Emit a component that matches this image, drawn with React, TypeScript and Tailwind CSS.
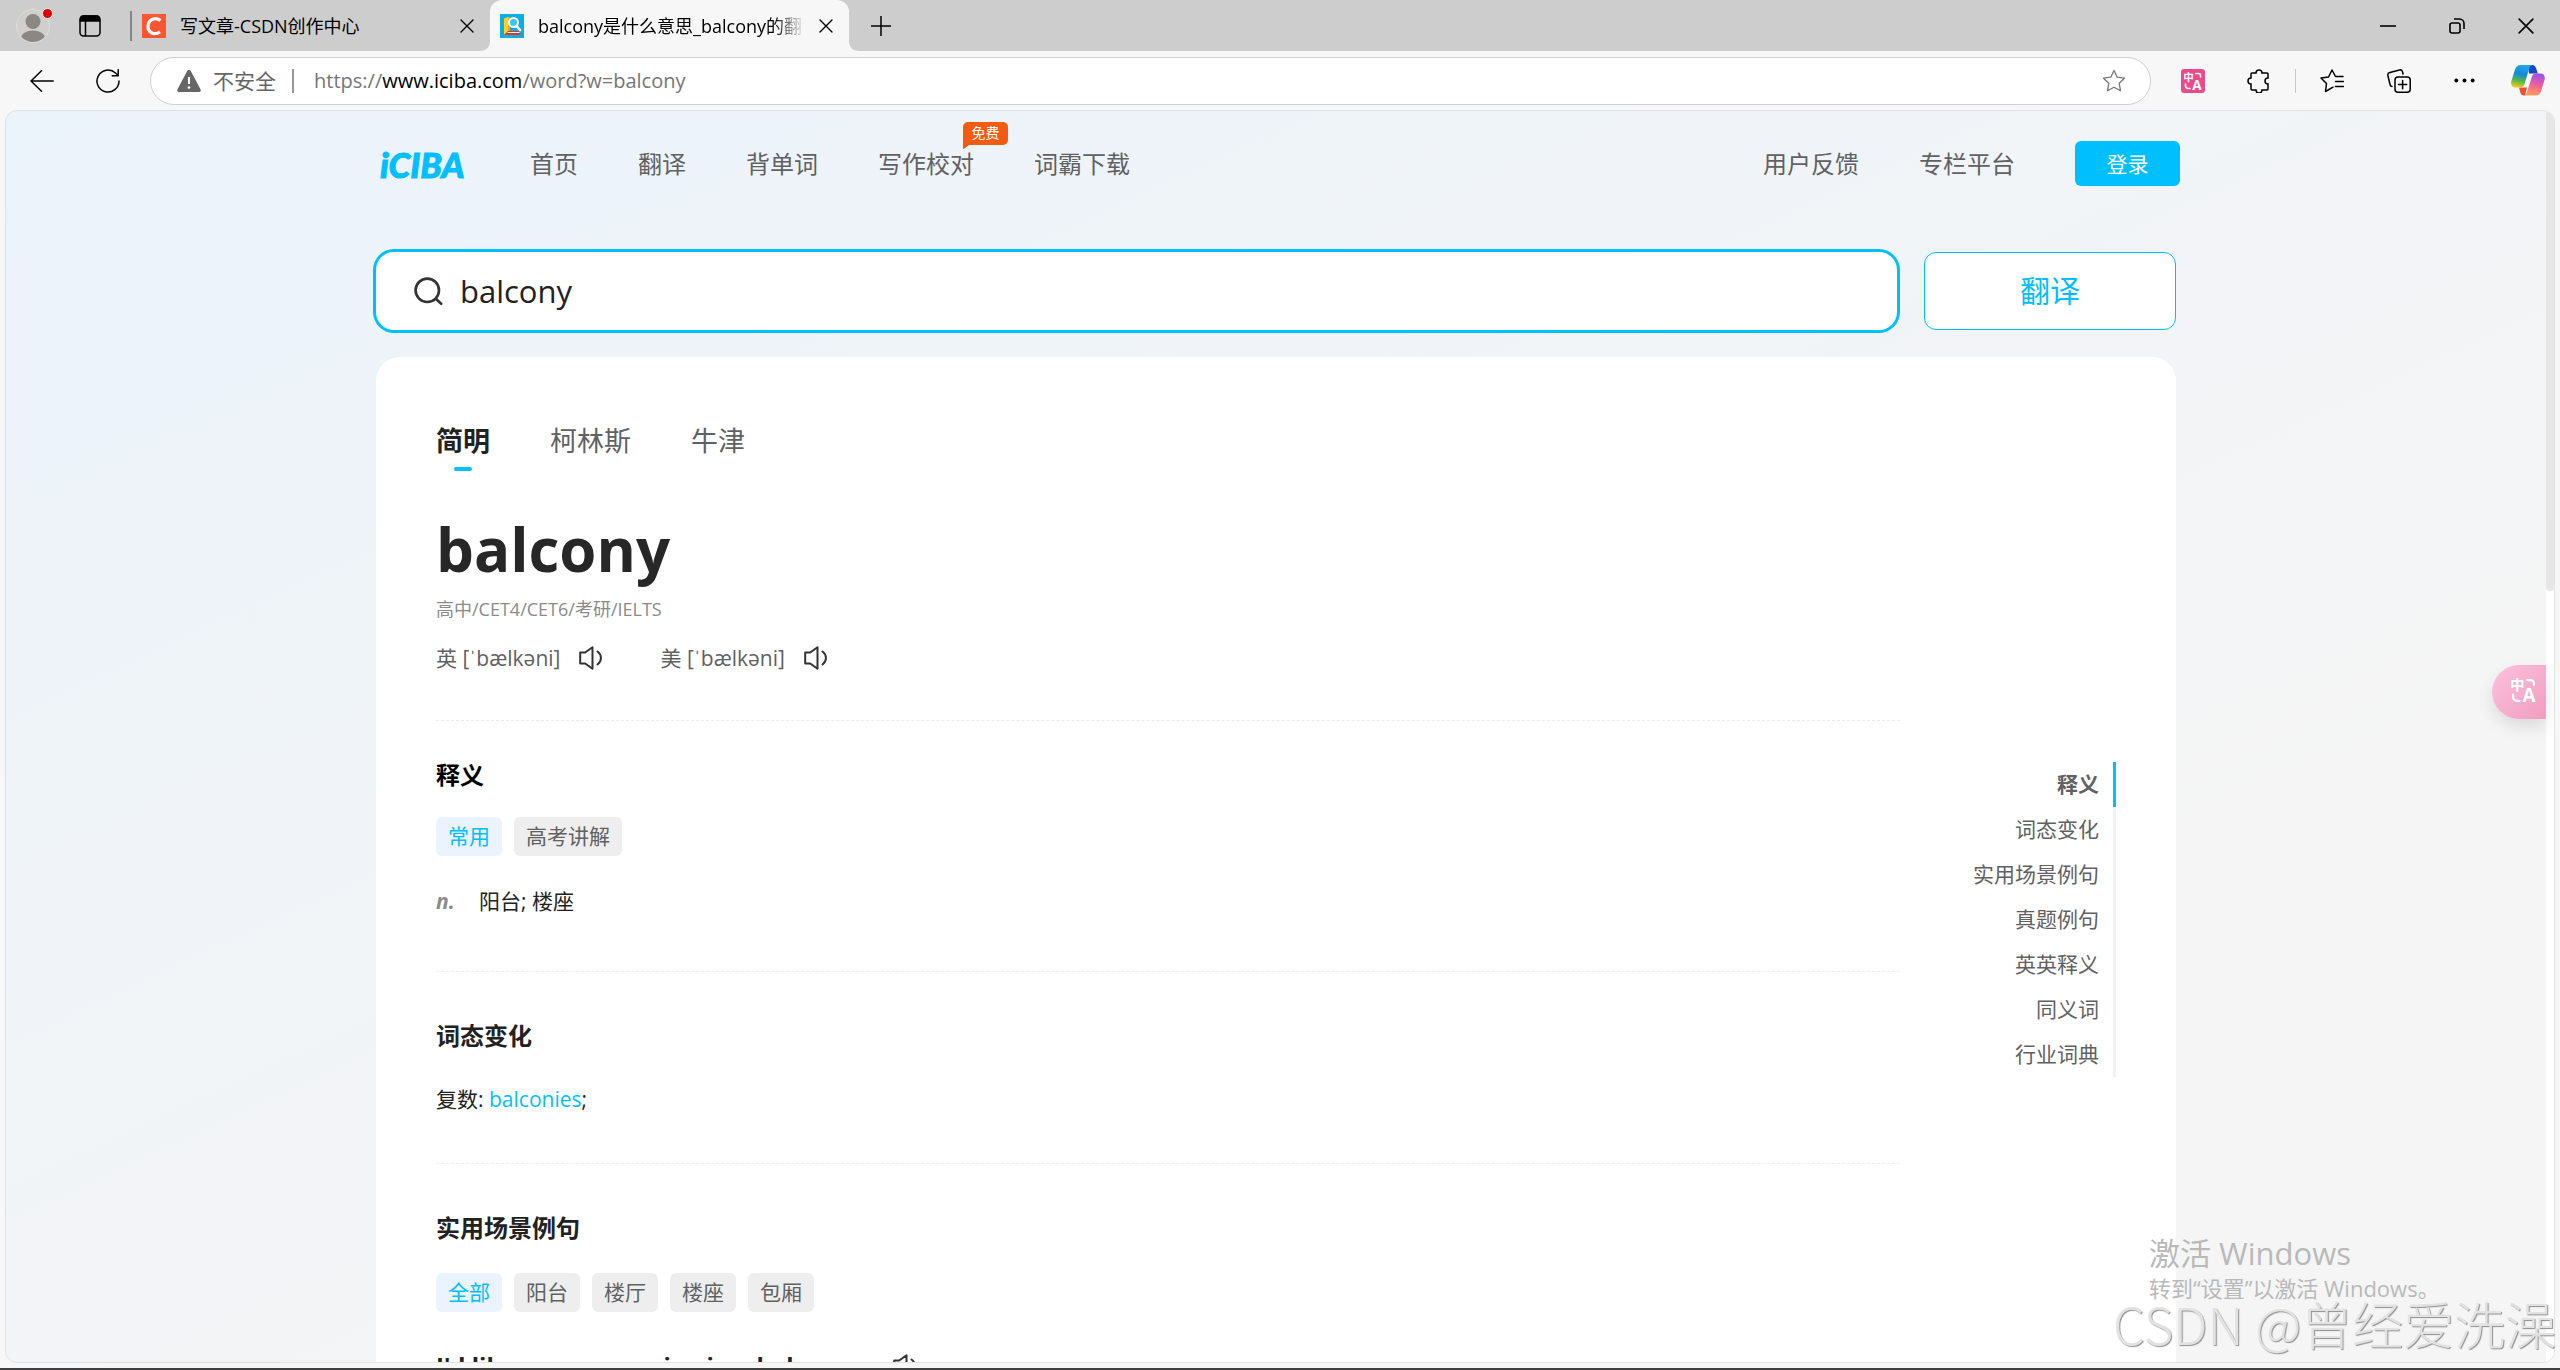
import { useState } from "react";
import type { ReactNode } from "react";
import clsx from "clsx";

const NAV_LINKS = [
  { label: "首页" },
  { label: "翻译" },
  { label: "背单词" },
  { label: "写作校对", badge: "免费" },
  { label: "词霸下载" },
];

const DICTIONARIES = ["简明", "柯林斯", "牛津"];

const ANCHORS = ["释义", "词态变化", "实用场景例句", "真题例句", "英英释义", "同义词", "行业词典"];

function CloseIcon({ className }: { className?: string }) {
  return (
    <svg viewBox="0 0 14 14" className={className} fill="none" stroke="currentColor" strokeWidth="1.4" strokeLinecap="round">
      <path d="M1 1l12 12M13 1L1 13" />
    </svg>
  );
}

function TranslateGlyph({ className }: { className?: string }) {
  return (
    <svg viewBox="0 0 24 24" className={className} fill="none" stroke="#fff" strokeWidth="2.200" strokeLinecap="round">
      <text x="-1" y="11.500" fontSize="14" fontWeight="700" fill="#fff" stroke="none" fontFamily="Noto Sans CJK SC, sans-serif">
        中
      </text>
      <text x="11" y="23.500" fontSize="18" fontWeight="700" fill="#fff" stroke="none" fontFamily="Open Sans, sans-serif">
        A
      </text>
      <path d="M15.500 2h3.500a3 3 0 0 1 3 3v1.500" />
      <path d="M2 16v2a4 4 0 0 0 4 4h2" />
    </svg>
  );
}

function SpeakerIcon() {
  return (
    <svg viewBox="0 0 24 24" className="size-6" fill="none" stroke="#333" strokeWidth="2" strokeLinejoin="round" strokeLinecap="round">
      <path d="M1.200 6.500h5L13.500 1.200v21.600L6.200 17.500h-5z" />
      <path d="M18.500 5.500c4.600 3.400 4.600 9.600 0 13" />
    </svg>
  );
}

function StarPath() {
  return (
    <path d="M12 1.500l3.200 6.700 7.300 1-5.300 5.100 1.300 7.400L12 18.200l-6.500 3.500 1.300-7.400L1.500 9.200l7.300-1z" />
  );
}

function CopilotIcon() {
  return (
    <svg viewBox="0 0 34 31" className="h-[31px] w-[34px]">
      <defs>
        <linearGradient id="cpLeft" x1="0.500" y1="0" x2="0.300" y2="1">
          <stop offset="0" stopColor="#22a5f0" />
          <stop offset="0.400" stopColor="#1489d8" />
          <stop offset="0.700" stopColor="#52b84f" />
          <stop offset="1" stopColor="#f5c916" />
        </linearGradient>
        <linearGradient id="cpRight" x1="0.600" y1="0" x2="0.400" y2="1">
          <stop offset="0" stopColor="#9a52ee" />
          <stop offset="0.500" stopColor="#ee5f9a" />
          <stop offset="1" stopColor="#ff9f55" />
        </linearGradient>
      </defs>
      <path d="M17 0h4c2.500 0 3.600 1.600 4.200 3.600L26.800 8.500H18z" fill="#1548c8" />
      <path d="M8 22.500h8L14 30.500h-1c-2.300 0-3.200-1.500-3.800-3.500z" fill="#ee4f31" />
      <path d="M9.500 0h12c-2 .5-2.800 2-3.400 4l-4.600 15c-.7 2.300-1.900 3.500-4.200 3.500H4.500C1 22.500-.6 19.600.400 16L4 4.500C5 1.500 6.800 0 9.500 0z" fill="url(#cpLeft)" />
      <path d="M24.500 8.500h5c3.500 0 5 2.900 4 6.500L30 26.500c-.9 2.800-2.700 4-5.200 4h-12c2-.5 2.800-2 3.400-4l4.600-14.500c.7-2.300 1.500-3.500 3.700-3.500z" fill="url(#cpRight)" />
    </svg>
  );
}

function TabStrip() {
  return (
    <div className="flex h-[51px] items-center bg-[#cdcdcd] pl-4">
      <button type="button" aria-label="Profile" className="relative size-[34px]">
        <svg viewBox="0 0 34 34" className="size-full">
          <defs>
            <clipPath id="avatarClip">
              <circle cx="17" cy="17" r="16" />
            </clipPath>
          </defs>
          <circle cx="17" cy="17" r="16.500" fill="#d1cfcb" stroke="#dddcd9" />
          <g fill="#8b8884" clipPath="url(#avatarClip)">
            <circle cx="17" cy="12.500" r="7.500" />
            <ellipse cx="17" cy="29.500" rx="12" ry="8" />
          </g>
        </svg>
        <span className="absolute -right-[3px] -top-[1px] size-[11px] rounded-full border border-[#f2f2f2] bg-[#e10000]" />
      </button>
      <button type="button" aria-label="Workspaces" className="ml-[29px]">
        <svg viewBox="0 0 22 22" className="size-[22px]" fill="none" stroke="#000" strokeWidth="1.500">
          <rect x="1" y="1" width="20" height="20" rx="3.500" />
          <path d="M1.500 6V4a3 3 0 0 1 3-3h13a3 3 0 0 1 3 3v2z" fill="#000" />
          <path d="M6.500 6v15" />
        </svg>
      </button>
      <span className="ml-[29px] h-[30px] w-0.5 bg-[#868686]" />

      <div className="flex w-[358px] items-center gap-3.5 pl-2.5 pr-4">
        <svg viewBox="0 0 24 24" className="size-6">
          <path fill="#fc5531" d="M0 0h24v24H0z" />
          <path d="M18.500 6.500C13.500 2.800 6.500 5 6 12c-.3 7 6.500 9.500 12 6" fill="none" stroke="#fff" strokeWidth="3.200" />
        </svg>
        <span className="flex-1 truncate text-[18px] leading-6 text-black">写文章-CSDN创作中心</span>
        <button type="button" aria-label="Close tab">
          <CloseIcon className="size-3.5" />
        </button>
      </div>

      <div className="relative flex h-full w-[359px] items-center gap-3.5 rounded-t-xl bg-[#f7f7f7] pl-2.5 pr-4">
        <svg viewBox="0 0 10 10" className="absolute -left-2.5 bottom-0 size-2.5" fill="#f7f7f7">
          <path d="M10 0v10H0C6 10 10 6 10 0z" />
        </svg>
        <svg viewBox="0 0 10 10" className="absolute -right-2.5 bottom-0 size-2.5" fill="#f7f7f7">
          <path d="M0 0v10h10C4 10 0 6 0 0z" />
        </svg>
        <svg viewBox="0 0 24 24" className="size-6">
          <path fill="#0aaee6" d="M0 0h24v24H0z" />
          <path fill="#ffd21f" d="M4 4.500l4-1.500v15l-4 3z" />
          <path fill="#f2a900" d="M8 3h2v15H8z" />
          <path fill="#e0361c" d="M4 21l4-4h11l2 4z" />
          <path fill="#fff" d="M8 18h11l1 1H7z" />
          <circle cx="13.500" cy="8.500" r="4.500" fill="#39c4f2" stroke="#fff" strokeWidth="2" />
          <path d="M16.500 12l3.500 4" stroke="#fff" strokeWidth="2.600" strokeLinecap="round" />
        </svg>
        <span className="flex-1 overflow-hidden whitespace-nowrap text-[18px] leading-6 text-black [mask-image:linear-gradient(to_right,#000_88%,transparent)]">
          balcony是什么意思_balcony的翻译
        </span>
        <button type="button" aria-label="Close tab">
          <CloseIcon className="size-3.5" />
        </button>
      </div>

      <button type="button" aria-label="New tab" className="ml-[22px]">
        <svg viewBox="0 0 20 20" className="size-5" stroke="#000" strokeWidth="1.500">
          <path d="M10 0v20M0 10h20" />
        </svg>
      </button>

      <div className="ml-auto flex">
        <button type="button" aria-label="Minimize" className="flex w-[69px] items-center justify-center">
          <svg viewBox="0 0 16 16" className="size-4" stroke="#000" strokeWidth="1.600">
            <path d="M0 8h16" />
          </svg>
        </button>
        <button type="button" aria-label="Restore" className="flex w-[69px] items-center justify-center">
          <svg viewBox="0 0 16 16" className="size-4" fill="none" stroke="#000" strokeWidth="1.600">
            <rect x="1" y="5" width="10" height="10" rx="2" />
            <path d="M5 1h5.500A4.500 4.500 0 0 1 15 5.500V11" />
          </svg>
        </button>
        <button type="button" aria-label="Close window" className="flex w-[69px] items-center justify-center">
          <CloseIcon className="size-4" />
        </button>
      </div>
    </div>
  );
}

function Toolbar() {
  return (
    <div className="flex h-[59px] items-center bg-[#f7f7f7] pl-[30px] pr-[15px]">
      <button type="button" aria-label="Back">
        <svg viewBox="0 0 24 24" className="size-6" fill="none" stroke="#000" strokeWidth="1.500" strokeLinecap="round" strokeLinejoin="round">
          <path d="M23.200 12H1M11.500 1.800L1 12l10.500 10.200" />
        </svg>
      </button>
      <button type="button" aria-label="Reload" className="ml-[42px]">
        <svg viewBox="0 0 24 24" className="size-6" fill="none" stroke="#000" strokeWidth="1.500" strokeLinecap="round" strokeLinejoin="round">
          <path d="M23 12A11 11 0 1 1 19.500 4l2.700 2.500" />
          <path d="M22.200 .8v6h-6" />
        </svg>
      </button>

      <div className="ml-[30px] flex h-12 flex-1 items-center rounded-full border border-[#d0d0d0] bg-white pl-[26px] pr-6">
        <svg viewBox="0 0 24 22" className="h-[22px] w-6">
          <path d="M10.200 1a2 2 0 0 1 3.600 0l9.800 18.500a1.700 1.700 0 0 1-1.500 2.500H1.900a1.700 1.700 0 0 1-1.500-2.500z" fill="#666" />
          <path d="M12 7v7" stroke="#fff" strokeWidth="2" />
          <circle cx="12" cy="17.500" r="1.300" fill="#fff" />
        </svg>
        <span className="ml-3 text-[21px] leading-[30px] text-[#666]">不安全</span>
        <span className="ml-4 h-6 w-0.5 bg-[#999]" />
        <p className="ml-5 flex-1 text-[20px] leading-[30px] text-[#767676]">
          https://<span className="text-black">www.iciba.com</span>/word?w=balcony
        </p>
        <button type="button" aria-label="Add to favorites">
          <svg viewBox="0 0 24 24" className="size-6" fill="none" stroke="#777" strokeWidth="1.300" strokeLinejoin="round">
            <StarPath />
          </svg>
        </button>
      </div>

      <div className="ml-[30px] flex items-center gap-[42px]">
        <button type="button" aria-label="Translate extension" className="flex size-6 items-center justify-center rounded-[3px] bg-[#ec4a89]">
          <TranslateGlyph className="size-[18px]" />
        </button>
        <button type="button" aria-label="Extensions">
          <svg viewBox="0 0 24 24" className="size-6" fill="none" stroke="#000" strokeWidth="1.500">
            <path d="M5 4h4a3 3 0 0 1 6 0h5a1 1 0 0 1 1 1v4a3 3 0 0 0 0 6v5a1 1 0 0 1-1 1h-5a3 3 0 0 1-6 0H5a1 1 0 0 1-1-1v-5a3 3 0 0 1 0-6V5a1 1 0 0 1 1-1z" />
          </svg>
        </button>
      </div>
      <span className="mx-6 h-6 w-px bg-[#c8c8c8]" />
      <div className="flex items-center gap-[43px]">
        <button type="button" aria-label="Favorites">
          <svg viewBox="0 0 24 24" className="size-6" fill="none" stroke="#000" strokeWidth="1.500" strokeLinecap="round" strokeLinejoin="round">
            <path d="M13 18.200L5.500 22.500l1-8L1 9l7.500-1L12 1l3.500 6.500h7.500" />
            <path d="M15.500 12.500h8M15.500 17.500h8" />
          </svg>
        </button>
        <button type="button" aria-label="Collections">
          <svg viewBox="0 0 24 24" className="size-6" fill="none" stroke="#000" strokeWidth="1.500" strokeLinecap="round">
            <rect x="8" y="8" width="15.200" height="15.200" rx="3" />
            <path d="M15.600 11.500v8.200M11.500 15.600h8.200" />
            <path d="M5 17.500c-1.200-.2-1.800-1-2-2L.9 6.500c-.3-1.600.4-2.700 2-3.100L12.500 1c1.500-.4 2.700.4 3.100 1.900L16 5" />
          </svg>
        </button>
        <button type="button" aria-label="Settings and more">
          <svg viewBox="0 0 21 5" className="h-[5px] w-[21px]">
            <circle cx="2.300" cy="2.500" r="1.900" />
            <circle cx="10.500" cy="2.500" r="1.900" />
            <circle cx="18.700" cy="2.500" r="1.900" />
          </svg>
        </button>
      </div>
      <button type="button" aria-label="Copilot" className="ml-9">
        <CopilotIcon />
      </button>
    </div>
  );
}

function SiteHeader() {
  return (
    <header className="mx-auto flex h-[45px] w-full max-w-[1800px] items-center text-[24px] leading-9 text-[#5f6163]">
      <a
        href="#home"
        className="w-[150px] font-[Lato] text-[35px] font-black italic text-[#00bfff] [-webkit-text-stroke:1px_#00bfff]"
      >
        iCIBA
      </a>
      <nav className="flex gap-[60px]">
        {NAV_LINKS.map((link) => (
          <a key={link.label} href={`#${link.label}`} className="relative">
            {link.label}
            {link.badge && (
              <span className="absolute -right-[34px] -top-6 flex h-[23px] w-[45px] items-center justify-center rounded-[5px] rounded-bl-none bg-[#f45b12] text-[14px] leading-4 text-white">
                {link.badge}
                <svg viewBox="0 0 6 4" className="absolute left-0 top-full h-1 w-1.5" fill="#f45b12">
                  <path d="M0 0h6L1.500 3.600Q0 4.500 0 3z" />
                </svg>
              </span>
            )}
          </a>
        ))}
      </nav>
      <nav className="ml-auto flex items-center gap-[60px]">
        <a href="#feedback">用户反馈</a>
        <a href="#columns">专栏平台</a>
        <button type="button" className="h-[45px] w-[105px] rounded-md bg-[#00bfff] text-[21px] text-white">
          登录
        </button>
      </nav>
    </header>
  );
}

function SearchBar() {
  const [word, setWord] = useState("balcony");
  return (
    <form className="flex h-[78px] gap-[27px]" onSubmit={(e) => e.preventDefault()}>
      <label className="flex flex-1 items-center gap-[17px] rounded-[18px] bg-white pl-[38px] ring-3 ring-[#00bfff]">
        <svg viewBox="0 0 29 29" className="size-[29px]" fill="none" stroke="#333" strokeWidth="2.600" strokeLinecap="round">
          <circle cx="13.300" cy="13.300" r="11.700" />
          <path d="M21.800 21.800l5.400 5" />
        </svg>
        <input
          aria-label="查词"
          value={word}
          onChange={(e) => setWord(e.target.value)}
          className="flex-1 bg-transparent text-[31px] leading-[42px] text-[#222] outline-none"
        />
      </label>
      <button type="submit" className="w-[252px] rounded-xl border border-[#00bfff] bg-white pb-0.5 text-[30px] text-[#00bfff]">
        翻译
      </button>
    </form>
  );
}

function Phonetic({ region, ipa }: { region: string; ipa: string }) {
  return (
    <li className="flex items-center gap-[19px]">
      <span>
        {region} [{ipa}]
      </span>
      <button type="button" aria-label={`${region} 发音`}>
        <SpeakerIcon />
      </button>
    </li>
  );
}

function TagRow({ tags, className }: { tags: string[]; className?: string }) {
  const [active, setActive] = useState(tags[0]);
  return (
    <div className={clsx("flex gap-3", className)}>
      {tags.map((tag) => (
        <button
          key={tag}
          type="button"
          onClick={() => setActive(tag)}
          className={clsx(
            "h-[39px] rounded-md px-3 text-[21px] leading-[39px]",
            tag === active ? "bg-[#ebf3ff] text-[#00bfff]" : "bg-[#eee] text-[#5f6163]",
          )}
        >
          {tag}
        </button>
      ))}
    </div>
  );
}

function Section({ title, className, children }: { title: string; className?: string; children: ReactNode }) {
  return (
    <section className={clsx("border-t border-dashed border-[#ebebeb]", className)}>
      <h2 className="text-[24px] font-bold leading-9">{title}</h2>
      {children}
    </section>
  );
}

function WordCard() {
  const [dictionary, setDictionary] = useState(DICTIONARIES[0]);
  return (
    <article className="mt-[27px] rounded-3xl bg-white px-[60px] pt-[66px] text-[21px] leading-[30px] text-[#222]">
      <div className="flex gap-[60px]">
        {DICTIONARIES.map((name) => (
          <button
            key={name}
            type="button"
            onClick={() => setDictionary(name)}
            className={clsx(
              "flex flex-col items-center gap-2 text-[27px] leading-9",
              name === dictionary ? "font-bold" : "text-[#5f6163]",
            )}
          >
            {name}
            <span className={clsx("h-1 w-[18px] rounded-full", name === dictionary && "bg-[#00bfff]")} />
          </button>
        ))}
      </div>

      <h1 className="mt-[42px] text-[60px] font-bold leading-[72px] text-[#272727]">balcony</h1>
      <p className="mt-3 text-[18px] leading-6 text-[#8b8b8b]">高中/CET4/CET6/考研/IELTS</p>
      <ul className="mt-[22px] flex gap-[57px] text-[#5f6163]">
        <Phonetic region="英" ipa="ˈbælkəni" />
        <Phonetic region="美" ipa="ˈbælkəni" />
      </ul>

      <div className="mt-[47px] flex">
        <div className="flex-1">
          <Section title="释义" className="pb-[55px] pt-9 text-black">
            <TagRow tags={["常用", "高考讲解"]} className="mt-6" />
            <p className="mt-[30px] flex text-[#222]">
              <i className="w-[43px] font-bold text-[#8b8b8b]">n.</i>
              阳台; 楼座
            </p>
          </Section>
          <Section title="词态变化" className="pb-[49px] pt-[46px]">
            <p className="mt-[30px]">
              复数:{" "}
              <a href="#balconies" className="text-[#00bfff]">
                balconies
              </a>
              ;
            </p>
          </Section>
          <Section title="实用场景例句" className="pt-[46px]">
            <TagRow tags={["全部", "阳台", "楼厅", "楼座", "包厢"]} className="mt-[27px]" />
            <p className="mt-9 flex items-center gap-[43px] text-[24px] font-bold leading-9">
              I'd like a room serving in a balcony
              <button type="button" aria-label="发音">
                <SpeakerIcon />
              </button>
            </p>
          </Section>
        </div>

        <nav className="w-[216px] pt-[42px]">
          <ul className="text-right leading-[45px] text-[#5f6163]">
            {ANCHORS.map((label, i) => (
              <li
                key={label}
                className={clsx("border-r-3 pr-3.5", i === 0 ? "border-[#00bfff] font-bold" : "border-[#f2f2f2]")}
              >
                <a href={`#${label}`}>{label}</a>
              </li>
            ))}
          </ul>
        </nav>
      </div>
    </article>
  );
}

export default function App() {
  return (
    <div className="relative flex h-screen flex-col overflow-hidden border-b-2 border-[#404040] bg-[#f7f7f7] font-['Open_Sans','Noto_Sans_CJK_SC',sans-serif]">
      <TabStrip />
      <Toolbar />
      <div className="relative mx-[5px] mb-[5px] min-h-0 flex-1 overflow-hidden rounded-xl border border-[#e2e2e2] bg-[linear-gradient(155deg,#ebf3fb_0%,#f5f5f5_72%)] pt-[30px]">
        <SiteHeader />
        <div className="pr-2 pt-[66px]">
          <main className="mx-auto w-full max-w-[1800px]">
            <SearchBar />
            <WordCard />
          </main>
        </div>

        <div className="absolute inset-y-0 right-0 w-2 bg-white">
          <div className="h-[480px] rounded-b bg-[#e6e6e6]" />
        </div>
        <button
          type="button"
          aria-label="翻译网页"
          className="absolute right-2 top-[554px] flex h-[54px] w-[54px] items-center rounded-l-full bg-linear-to-br from-[#fbc2dc] to-[#f19dc0] pb-1 pl-[19px] shadow-[0_8px_16px_rgba(0,0,0,0.1)]"
        >
          <TranslateGlyph className="size-[25px]" />
        </button>
      </div>

      <div className="pointer-events-none absolute bottom-[25px] right-1 w-[443px] text-[#b9b9b9]">
        <div className="pl-9">
          <p className="text-[31px] leading-10">激活 Windows</p>
          <p className="text-[22px] leading-[30px]">转到“设置”以激活 Windows。</p>
        </div>
        <p className="whitespace-nowrap font-['Noto_Sans_CJK_SC',sans-serif] text-[51px] font-light leading-10 text-[#e2e2e2] [text-shadow:1px_1px_1px_#8f8f8f]">
          CSDN @曾经爱洗澡
        </p>
      </div>
    </div>
  );
}
